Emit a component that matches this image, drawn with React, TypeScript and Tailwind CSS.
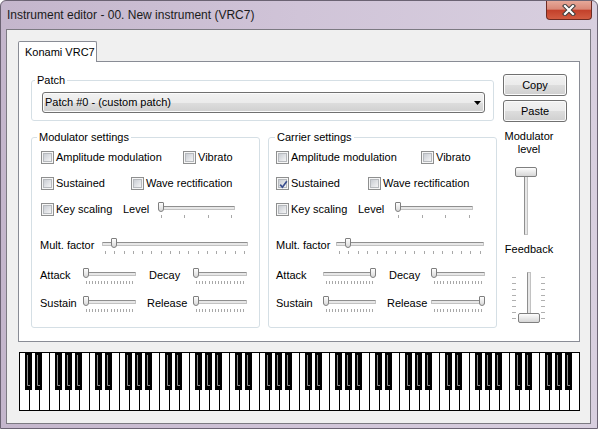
import React from "react";

// Win7-style "Instrument editor" dialog for the VRC7 chip

const FONT = "font-['Liberation_Sans',Arial,sans-serif]";

type Cfg = {
  legend: string;
  pad: string;
  am: string;
  sus: string;
  ks: string;
  lvlLabel: string;
  lvl: string;
  rowPad: string;
  multLabel: string;
  mult: string;
  adLabel: string;
  adSlider: string;
  cell: string;
  decayPad: string;
  relPad: string;
  right: string;
};

const MOD: Cfg = {
  legend: "ml-[5px]",
  pad: "pl-[9px]",
  am: "w-[142px]",
  sus: "w-[90px]",
  ks: "w-[82px]",
  lvlLabel: "w-[35px]",
  lvl: "w-[77px]",
  rowPad: "pl-[8px]",
  multLabel: "w-[62px]",
  mult: "w-[146px]",
  adLabel: "w-[43px]",
  adSlider: "w-[53px]",
  cell: "w-[57px]",
  decayPad: "pl-[13px]",
  relPad: "pl-[11px]",
  right: "w-[54px]",
};

const CAR: Cfg = {
  legend: "ml-[6px]",
  pad: "pl-[7px]",
  am: "w-[145px]",
  sus: "w-[92px]",
  ks: "w-[82px]",
  lvlLabel: "w-[37px]",
  lvl: "w-[78px]",
  rowPad: "pl-[7px]",
  multLabel: "w-[60px]",
  mult: "w-[148px]",
  adLabel: "w-[47px]",
  adSlider: "w-[53px]",
  cell: "w-[55px]",
  decayPad: "pl-[13px]",
  relPad: "pl-[11px]",
  right: "w-[54px]",
};

function Legend({ className, children }: { className: string; children: React.ReactNode }) {
  return <div className={`-mt-[7px] w-fit bg-white px-[2px] leading-[13px] ${className}`}>{children}</div>;
}

function Check({ checked }: { checked?: boolean }) {
  return (
    <span className="relative flex h-[13px] w-[13px] shrink-0 border border-[#8e8f8f] bg-[#f6f6f6] p-px">
      <span className="h-full w-full border border-[#b6b9bd] bg-gradient-to-br from-[#c9cdd3] to-[#f4f4f5]" />
      {checked && (
        <svg className="absolute inset-0" width="13" height="13" viewBox="0 0 13 13">
          <path d="M3.2 6.6 5.4 9.2 9.8 3.2" stroke="#3b4f8e" strokeWidth="1.7" fill="none" />
        </svg>
      )}
    </span>
  );
}

function CheckLabel({ label, checked, className = "" }: { label: string; checked?: boolean; className?: string }) {
  return (
    <div className={`flex shrink-0 items-center gap-[2px] ${className}`}>
      <Check checked={checked} />
      <span>{label}</span>
    </div>
  );
}

function HSlider({ className, value, max, ticks }: { className: string; value: number; max: number; ticks: number }) {
  const f = value / max;
  return (
    <div className={`relative h-[16px] shrink-0 ${className}`}>
      <div className="mt-[4px] h-[4px] rounded-[1px] border border-[#c2c2c2] border-t-[#8f8f8f] bg-[#e7e7e7]" />
      <div className="mt-[5px] flex justify-between px-[3px]">
        {Array.from({ length: ticks }).map((_, i) => (
          <span key={i} className="h-[3px] w-px bg-[#a8a8a8]" />
        ))}
      </div>
      <span
        className="absolute top-0 h-[10px] w-[6px] rounded-b-[3px] rounded-t-[1px] border border-[#7f7f7f] bg-gradient-to-b from-[#fdfdfd] to-[#d9d9d9]"
        style={{ left: `calc(${f * 100}% - ${f * 6}px)` }}
      />
    </div>
  );
}

function Settings({ cfg, title, attack, release, sustained, className = "" }: {
  cfg: Cfg;
  title: string;
  attack: number;
  release: number;
  sustained?: boolean;
  className?: string;
}) {
  return (
    <div className={`h-[191px] w-[229px] shrink-0 rounded-[3px] border border-[#d5dfe5] ${className}`}>
      <Legend className={cfg.legend}>{title}</Legend>
      <div className={`mt-[7px] flex h-[13px] items-center ${cfg.pad}`}>
        <CheckLabel className={cfg.am} label="Amplitude modulation" />
        <CheckLabel label="Vibrato" />
      </div>
      <div className={`mt-[13px] flex h-[13px] items-center ${cfg.pad}`}>
        <CheckLabel className={cfg.sus} label="Sustained" checked={sustained} />
        <CheckLabel label="Wave rectification" />
      </div>
      <div className={`mt-[13px] flex h-[13px] items-center ${cfg.pad}`}>
        <CheckLabel className={cfg.ks} label="Key scaling" />
        <span className={`shrink-0 ${cfg.lvlLabel}`}>Level</span>
        <HSlider className={cfg.lvl} value={0} max={3} ticks={4} />
      </div>
      <div className={`mt-[23px] flex h-[13px] items-center ${cfg.rowPad}`}>
        <span className={`shrink-0 ${cfg.multLabel}`}>Mult. factor</span>
        <HSlider className={cfg.mult} value={1} max={15} ticks={16} />
      </div>
      <div className={`mt-[17px] flex h-[13px] items-center ${cfg.rowPad}`}>
        <span className={`shrink-0 ${cfg.adLabel}`}>Attack</span>
        <HSlider className={cfg.adSlider} value={attack} max={15} ticks={16} />
        <span className={`shrink-0 ${cfg.cell} ${cfg.decayPad}`}>Decay</span>
        <HSlider className={cfg.right} value={0} max={15} ticks={16} />
      </div>
      <div className={`mt-[15px] flex h-[13px] items-center ${cfg.rowPad}`}>
        <span className={`shrink-0 ${cfg.adLabel}`}>Sustain</span>
        <HSlider className={cfg.adSlider} value={0} max={15} ticks={16} />
        <span className={`shrink-0 ${cfg.cell} ${cfg.relPad}`}>Release</span>
        <HSlider className={cfg.right} value={release} max={15} ticks={16} />
      </div>
    </div>
  );
}

function Button({ children }: { children: React.ReactNode }) {
  return (
    <div className="flex h-[22px] items-center justify-center rounded-[3px] border border-[#707070] bg-[linear-gradient(#f2f2f2_0%,#ebebeb_50%,#dddddd_51%,#cfcfcf_100%)] shadow-[inset_0_0_0_1px_#fbfbfb]">
      {children}
    </div>
  );
}

function VThumb({ className }: { className: string }) {
  return (
    <span
      className={`absolute h-[10px] w-[22px] rounded-[2px] border border-[#7f7f7f] bg-gradient-to-b from-[#fdfdfd] to-[#d6d6d6] ${className}`}
    />
  );
}

function RightColumn() {
  return (
    <div className="ml-[2px] flex w-[60px] shrink-0 flex-col">
      <div className="-mt-[7px] text-center">Modulator</div>
      <div className="text-center">level</div>
      <div className="relative ml-[16px] mt-[11px] h-[68px] w-[22px]">
        <div className="mx-auto h-full w-[4px] border border-[#c2c2c2] border-l-[#8f8f8f] bg-[#e7e7e7]" />
        <VThumb className="left-0 top-0" />
      </div>
      <div className="mt-[8px] text-center">Feedback</div>
      <div className="relative ml-[13px] mt-[16px] flex h-[51px] w-[33px]">
        <div className="flex w-[4px] flex-col justify-between pb-[4px] pt-[5px]">
          {Array.from({ length: 8 }).map((_, i) => (
            <span key={i} className="h-px w-[4px] bg-[#b0b0b0]" />
          ))}
        </div>
        <div className="flex flex-1 justify-center">
          <div className="h-full w-[4px] border border-[#c2c2c2] border-l-[#8f8f8f] bg-[#e7e7e7]" />
        </div>
        <div className="flex w-[4px] flex-col justify-between pb-[4px] pt-[5px]">
          {Array.from({ length: 8 }).map((_, i) => (
            <span key={i} className="h-px w-[4px] bg-[#b0b0b0]" />
          ))}
        </div>
        <VThumb className="bottom-0 left-[6px]" />
      </div>
    </div>
  );
}

function Keyboard() {
  const W = 10;
  const blacks: number[] = [];
  for (let o = 0; o < 8; o++) for (const b of [1, 2, 4, 5, 6]) blacks.push((o * 7 + b) * W - 4);
  return (
    <svg className="ml-[12px] mt-[10px] block" width="561" height="59" viewBox="0 0 561 59">
      <rect x="0.5" y="0.5" width="560" height="58" fill="#fff" stroke="#000" />
      {Array.from({ length: 55 }, (_, i) => i + 1).map((i) => (
        <line key={i} x1={i * W + 0.5} y1="0" x2={i * W + 0.5} y2="59" stroke="#000" />
      ))}
      {blacks.map((x) => (
        <g key={x}>
          <rect x={x} y="0" width="7" height="38" fill="#000" />
          <path d={`M${x + 2.5} 3V33.5H${x + 5}`} stroke="#8c8c8c" fill="none" />
        </g>
      ))}
    </svg>
  );
}

function CloseButton() {
  return (
    <div className="mr-[5px] flex h-[19px] w-[46px] shrink-0 items-center justify-center rounded-b-[4px] border border-t-0 border-[#6e2b22] bg-[linear-gradient(#e6a899_0%,#d98877_45%,#c3412b_52%,#d25c42_100%)]">
      <svg width="14" height="12" viewBox="0 0 14 12">
        <path d="M3 2l8 8M11 2l-8 8" stroke="#3d3d3d" strokeWidth="4.2" strokeLinecap="square" />
        <path d="M3 2l8 8M11 2l-8 8" stroke="#fff" strokeWidth="2.2" strokeLinecap="square" />
      </svg>
    </div>
  );
}

export default function App() {
  return (
    <div
      className={`flex h-[429px] w-[598px] flex-col overflow-hidden rounded-t-[6px] border border-[#6b6373] bg-gradient-to-r from-[#c4b6cc] via-[#d0c4d8] to-[#d8cfdf] text-[11px] leading-[13px] text-black ${FONT}`}
    >
      <div className="flex h-[28px] shrink-0 items-start justify-between">
        <span className="mt-[7px] pl-[6px] text-[12px] leading-[15px] text-[#1b1b1b]">
          Instrument editor - 00. New instrument (VRC7)
        </span>
        <CloseButton />
      </div>
      <div className="ml-[5px] mr-[6px] h-[395px] shrink-0 border border-[#7c7a82] bg-[#f0f0f0]">
        <div className="ml-[11px] mt-[11px] flex flex-col">
          <div className="relative z-10 -mb-px flex h-[21px] w-[79px] items-center rounded-t-[2px] border border-b-0 border-[#898c95] bg-white pl-[6px]">
            Konami VRC7
          </div>
          <div className="h-[281px] w-[562px] border border-[#898c95] bg-white">
            <div className="flex items-start pl-[12px]">
              <div className="mt-[18px] w-[463px] shrink-0 rounded-[3px] border border-[#d5dfe5] pb-[7px]">
                <Legend className="ml-[3px]">Patch</Legend>
                <div className="ml-[10px] mt-[5px] flex h-[21px] w-[443px] items-center justify-between rounded-[3px] border border-[#707070] bg-[linear-gradient(#f2f2f2_0%,#ebebeb_50%,#dddddd_51%,#cfcfcf_100%)] pl-[2px] pr-[3px] shadow-[inset_0_0_0_1px_#fbfbfb]">
                  <span>Patch #0 - (custom patch)</span>
                  <svg width="7" height="4" viewBox="0 0 7 4">
                    <path d="M0 0h7L3.5 4z" fill="#000" />
                  </svg>
                </div>
              </div>
              <div className="ml-[9px] mt-[12px] flex w-[64px] shrink-0 flex-col gap-[4px]">
                <Button>Copy</Button>
                <Button>Paste</Button>
              </div>
            </div>
            <div className="mt-[15px] flex items-start pl-[12px]">
              <Settings cfg={MOD} title="Modulator settings" attack={0} release={0} />
              <Settings cfg={CAR} title="Carrier settings" attack={15} release={15} sustained className="ml-[8px] w-[228px]" />
              <RightColumn />
            </div>
          </div>
        </div>
        <Keyboard />
      </div>
    </div>
  );
}
